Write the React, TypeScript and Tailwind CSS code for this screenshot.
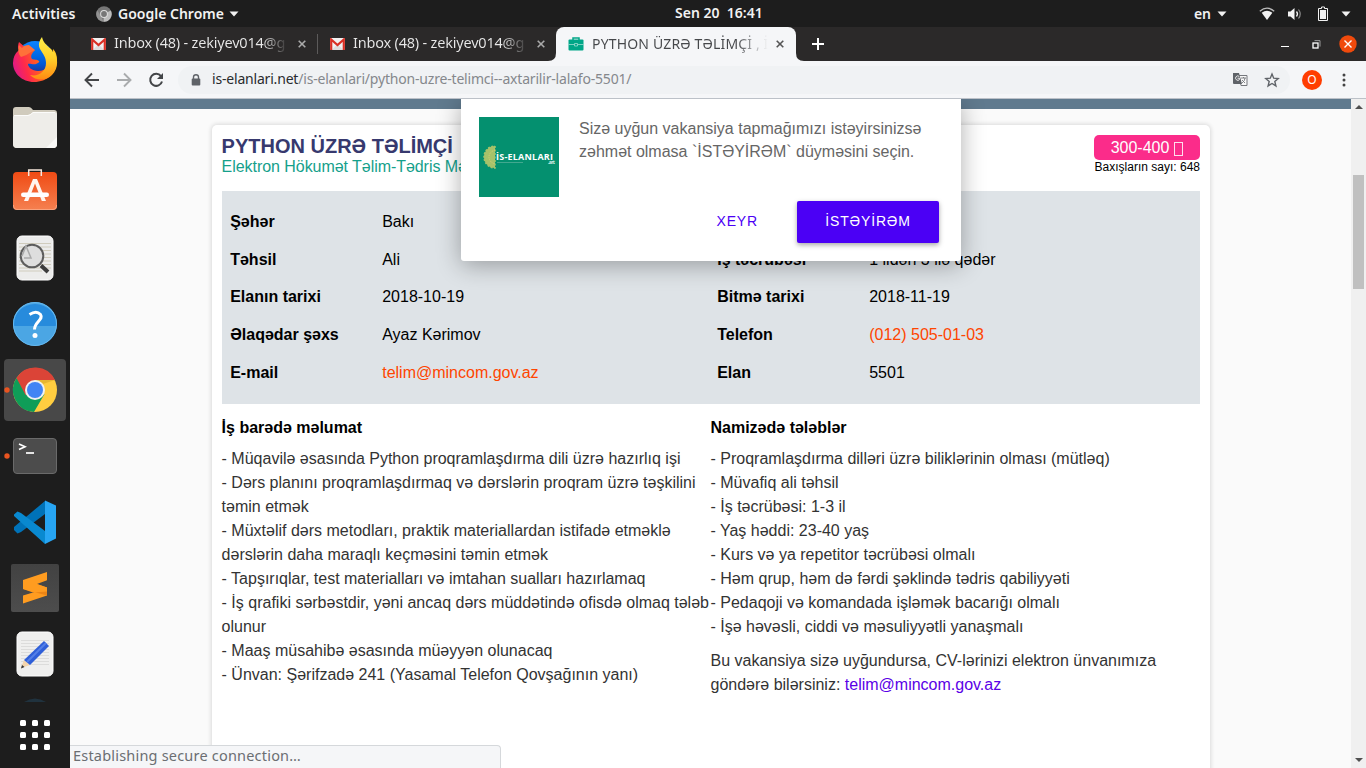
import React from "react";

const ui = "font-['Noto_Sans',sans-serif]";

function Caret() {
  return (
    <svg width="10" height="6" viewBox="0 0 10 6">
      <path d="M0.5 0.5h9L5 5.5z" fill="#f2f2f2" />
    </svg>
  );
}

function TopBar() {
  return (
    <div className={`relative flex h-[27px] shrink-0 items-center bg-[#1d1d1d] text-[14px] font-semibold text-[#f2f2f2] ${ui}`}>
      <span className="ml-3 w-[84px] whitespace-nowrap tracking-[0.1px]">Activities</span>
      <svg width="16" height="16" viewBox="0 0 16 16">
        <circle cx="8" cy="8" r="7.7" fill="#777" />
        <path d="M8 8L14.8 4.5A7.7 7.7 0 0 1 7.5 15.7z" fill="#bdbdbd" />
        <path d="M1.2 4.2L5 10 7.5 15.7A7.7 7.7 0 0 1 1.2 4.2z" fill="#929292" />
        <circle cx="8" cy="8" r="3.9" fill="#ddd" />
        <circle cx="8" cy="8" r="2.9" fill="#777" />
      </svg>
      <span className="ml-[6px] w-[106px] whitespace-nowrap">Google Chrome</span>
      <span className="ml-[5px]"><Caret /></span>
      <span className="ml-[436px] w-[88px] -translate-y-px whitespace-pre">{"Sen 20  16:41"}</span>
      <span className="ml-auto mr-[6px]">en</span>
      <Caret />
      <svg className="ml-[32px]" width="16" height="14" viewBox="0 0 16 14">
        <path d="M.8 4.2Q8-1.8 15.2 4.2" fill="none" stroke="#bbb" strokeWidth="1.3" />
        <path d="M2.7 5.8Q8 1.8 13.3 5.8L8 13z" fill="#f2f2f2" />
      </svg>
      <svg className="ml-[12px]" width="16" height="14" viewBox="0 0 16 14">
        <path d="M1 4.5h2.5L7.5 1v12L3.500 9.500H1z" fill="#f2f2f2" />
        <path d="M9.500 4.500q2 2.500 0 5" fill="none" stroke="#f2f2f2" strokeWidth="1.300" />
        <path d="M11.500 2.500q3.500 4.500 0 9" fill="none" stroke="#888" strokeWidth="1.200" />
      </svg>
      <svg className="ml-[14px]" width="12" height="16" viewBox="0 0 12 16">
        <path d="M1.500 2.500h3v-1.500h3v1.500h3v12h-9z" fill="none" stroke="#f2f2f2" />
        <path d="M3 4h6v9H3z" fill="#f2f2f2" />
      </svg>
      <span className="ml-[12px] mr-[15px]"><Caret /></span>
    </div>
  );
}

function DockCell({ children, active, dot }: { children: React.ReactNode; active?: boolean; dot?: boolean }) {
  return (
    <svg className="block shrink-0" width="70" height="66" viewBox="0 0 70 66">
      {active && <rect x="4" y="2" width="62" height="62" rx="4" fill="#484848" />}
      {dot && <circle cx="7" cy="33" r="2.700" fill="#e95420" />}
      {children}
    </svg>
  );
}

function Dock() {
  return (
    <div className="flex w-[70px] shrink-0 flex-col bg-[#1d1d1d]">
      <DockCell>
        <defs>
          <linearGradient id="fx" x1="0" y1=".6" x2="1" y2=".3">
            <stop offset="0" stopColor="#e01a87" /><stop offset=".25" stopColor="#ff2a4a" />
            <stop offset=".6" stopColor="#ff6a1a" /><stop offset="1" stopColor="#ffc61a" />
          </linearGradient>
          <linearGradient id="fy" x1="0" y1="0" x2="0" y2="1">
            <stop offset="0" stopColor="#fff04a" /><stop offset=".5" stopColor="#ffd02a" /><stop offset="1" stopColor="#ff8a12" />
          </linearGradient>
          <linearGradient id="fb" x1="0" y1="0" x2="0" y2="1">
            <stop offset="0" stopColor="#0a84ff" /><stop offset=".6" stopColor="#0059d6" /><stop offset="1" stopColor="#331a70" />
          </linearGradient>
        </defs>
        <circle cx="35" cy="33" r="19" fill="url(#fb)" />
        <path d="M19 15q-2 5 0 8-6 5-6 13c0 10 9 19 21 19 13 0 23-9 23-22 0-6-2-9-4-11v8C52 37 47 44 38 44c-6 0-10-4-10-7 2-1 5 1 8 0 2-1 4-2 3-3-2-2-5-1-7-2-2-3 0-6 3-9-3 0-5-2-8-1z" fill="url(#fx)" />
        <path d="M42 10c-3 4-4 8-2 12 3 5 6 8 6 14 0 9-8 14-16 12 6 6 16 6 22 0 7-7 6-17 2-24-1 2-1 1-2-1-4-4-9-7-10-13z" fill="url(#fy)" />
        <path d="M19 18q-2 8 2 12 5-1 10-5l4-2-6-5q-5 0-7 3z" fill="#ff7139" />
      </DockCell>
      <DockCell>
        <path d="M13 17q0-3 3-3h13q2 0 4 3h21q3 0 3 3v31q0 4-4 4H17q-4 0-4-4z" fill="#d0cbbd" />
        <path d="M13 25q0-3 3-3h12q2 0 5-3h21q3 0 3 3v29q0 4-4 4H17q-4 0-4-4z" fill="#eeede9" />
        <path d="M14 22.500h14q2 0 5-3h22" fill="none" stroke="#fff" strokeWidth=".8" />
        <path d="M46 55l11-11v7q0 4-4 4z" fill="#f9f9f7" />
      </DockCell>
      <DockCell>
        <defs><linearGradient id="sw" x1="0" y1="0" x2="0" y2="1"><stop stopColor="#f04b14" /><stop offset="1" stopColor="#f58050" /></linearGradient></defs>
        <rect x="13" y="13" width="44" height="38" rx="4" fill="url(#sw)" />
        <path d="M13.500 46v1q0 3.500 3.500 3.500h36q3.500 0 3.500-3.500v-1" fill="none" stroke="#f9a27d" />
        <path d="M28.700 17v-6h12.600v6" fill="none" stroke="#f7e7dc" strokeWidth="1.500" />
        <path d="M33 20h4l9 22h-4.200L35 24.500 28.200 42H24z" fill="#fff5ee" />
        <rect x="21" y="33.500" width="28" height="4.500" rx="2.200" fill="#fff" />
      </DockCell>
      <DockCell>
        <rect x="17" y="11" width="36" height="44" rx="5" fill="#ececeb" stroke="#fff" />
        <path d="M19 18.500h32M19 22h32M19 25.500h32M19 29h32M19 32.500h32M19 36h32M19 39.500h32M19 43h32M19 46h23" stroke="#d0ccbd" />
        <circle cx="32" cy="31" r="11.300" fill="#dedede" stroke="#5d5d5d" strokeWidth="2" />
        <path d="M22 31l4-10 5 12h-7" stroke="#aaa" strokeWidth="1.500" fill="none" />
        <path d="M41 40.500l7 6.500" stroke="#3c3c3c" strokeWidth="4" />
      </DockCell>
      <DockCell>
        <circle cx="35" cy="33" r="22" fill="#4ba6e4" />
        <path d="M13 35a22 22 0 0 1 44 0z" fill="#278bdc" />
        <circle cx="35" cy="33" r="21.500" fill="none" stroke="#65b8ef" />
        <path d="M29.500 23.500q7-4.500 11 0c3.500 5-6 7.500-6 15" fill="none" stroke="#fff" strokeWidth="3" />
        <circle cx="35" cy="44.500" r="2.500" fill="#fff" />
      </DockCell>
      <DockCell active dot>
        <circle cx="35" cy="33" r="22" fill="#ffcd40" />
        <path d="M35 33L16.500 21A22 22 0 0 0 34 55L44.500 37z" fill="#0f9d58" />
        <path d="M35 33L25.500 38 16.500 21A22 22 0 0 1 55 23H35z" fill="#db4437" />
        <path d="M36 23h19l-12 4z" fill="#b98c16" opacity=".35" />
        <circle cx="35" cy="33" r="10" fill="#f1f1f1" />
        <circle cx="35" cy="33" r="8" fill="#4285f4" />
      </DockCell>
      <DockCell dot>
        <rect x="13.500" y="15.500" width="43" height="35" rx="3.500" fill="#4c4c4c" stroke="#6a6a6a" />
        <path d="M19 21l6 2.800-6 2.800" fill="none" stroke="#fff" strokeWidth="1.700" />
        <path d="M26 30h8" stroke="#fff" strokeWidth="1.700" />
      </DockCell>
      <DockCell>
        <path d="M45 12v13L21 43l-3.500 1.500L14 41v-3z" fill="#0072b8" />
        <path d="M14 28v-2.500l3.500-3L21 24l24 18v13L14 27z" fill="#0989d0" />
        <path d="M45 11.500L56 16.500v33L45 55z" fill="#27a5f3" />
      </DockCell>
      <DockCell>
        <defs><linearGradient id="sb" x1="0" y1="0" x2="0" y2="1"><stop stopColor="#424242" /><stop offset="1" stopColor="#4d4d4d" /></linearGradient></defs>
        <rect x="11" y="9" width="48" height="48" rx="2" fill="url(#sb)" />
        <path d="M23 40.500l10-3L47 32.500v8L23 48.500z" fill="#ff9c20" />
        <path d="M23 25l14 4 10 3.500v8L23 34z" fill="#ec8516" />
        <path d="M23 25L47 17v8.200L37 29l10 3.500v4L33 37.500 23 34z" fill="#ff9c20" />
      </DockCell>
      <DockCell>
        <rect x="17" y="11" width="36" height="44" rx="5" fill="#efefee" stroke="#fff" />
        <path d="M21 19.500h28M21 22.500h28M21 25.500h28M21 28.500h28M21 31.500h28M21 34.500h28M21 37.500h28M21 40.500h28M21 43.500h28" stroke="#d7d7d6" strokeWidth=".8" />
        <path d="M21 47l3-8 6 5z" fill="#f3d4ac" />
        <path d="M21 47.500l1-3.500 2.500 2z" fill="#333" />
        <path d="M24 39L44 20l5 5L30 44z" fill="#2f5fd8" />
        <path d="M27 41L46 22" stroke="#547fe8" strokeWidth="2" />
      </DockCell>
      <svg className="mt-[11px] block" width="70" height="70" viewBox="0 0 70 70">
        <path d="M24 4q11-7 22 0z" fill="#20323e" />
        {[22, 34, 46].map((y) => [20, 32, 44].map((x) => <rect key={`${x}-${y}`} x={x} y={y} width="6" height="6" rx="1.500" fill="#fff" />))}
      </svg>
    </div>
  );
}

function Gmail() {
  return (
    <svg className="shrink-0" width="15" height="12" viewBox="0 0 15 12">
      <rect width="15" height="12" rx="1" fill="#f1f1f1" />
      <path d="M2 12l5.500-6 5.500 6z" fill="#dcdcdc" />
      <path d="M1.200 12V1.500L7.500 7l6.300-5.500V12" fill="none" stroke="#d93025" strokeWidth="2.200" />
    </svg>
  );
}

function Cross({ color }: { color: string }) {
  return (
    <svg className="shrink-0" width="8" height="8" viewBox="0 0 8 8">
      <path d="M.7.7l6.600 6.600M7.300.7L.7 7.300" stroke={color} strokeWidth="1.600" />
    </svg>
  );
}

function InboxTab() {
  return (
    <>
      <Gmail />
      <span className="ml-[8px] w-[175px] -translate-y-px overflow-hidden whitespace-nowrap bg-[linear-gradient(90deg,#e9e9e9_85%,#2b2929_100%)] bg-clip-text text-[14.500px] tracking-[-0.2px] text-transparent">
        Inbox (48) - zekiyev014@g
      </span>
    </>
  );
}

function TabStrip() {
  return (
    <div className={`flex h-[34px] shrink-0 items-center bg-[#2b2929] ${ui}`}>
      <div className="flex w-[248px] items-center pl-[21px]">
        <InboxTab />
        <span className="ml-[10px]"><Cross color="#aaa" /></span>
        <span className="ml-[11px] h-5 w-px bg-[#5c5a5a]" />
      </div>
      <div className="flex w-[238px] items-center pl-[12px]">
        <InboxTab />
        <span className="ml-[9px]"><Cross color="#aaa" /></span>
      </div>
      <div className="relative flex h-full w-[240px] items-center rounded-t-[8px] bg-[#f5f6f8] pl-[12px]">
        <svg className="absolute bottom-0 left-[-8px]" width="8" height="8"><path d="M8 0v8H0Q8 8 8 0" fill="#f5f6f8" /></svg>
        <svg className="absolute bottom-0 right-[-8px]" width="8" height="8"><path d="M0 0v8h8Q0 8 0 0" fill="#f5f6f8" /></svg>
        <svg width="16" height="14" viewBox="0 0 16 14">
          <path d="M5 3V1h6v2" fill="none" stroke="#00a687" strokeWidth="1.500" />
          <rect x=".5" y="2.500" width="15" height="11" rx="1" fill="#00a687" />
          <path d="M0 7.500h6.500M9.500 7.500H16M6.500 6.500h3v2.500h-3z" stroke="#8ad6c8" fill="none" strokeWidth=".9" />
        </svg>
        <span className="ml-[8px] w-[176px] -translate-y-px overflow-hidden whitespace-nowrap bg-[linear-gradient(90deg,#45474a_82%,#f5f6f8_100%)] bg-clip-text text-[14px] tracking-[0.05px] text-transparent">
          <span className="tracking-[0.16px]">PYTHON ÜZRƏ TƏLİMÇİ</span> , İ
        </span>
        <span className="ml-[8px]"><Cross color="#555" /></span>
      </div>
      <svg className="ml-[16px]" width="12" height="12"><path d="M6 0v12M0 6h12" stroke="#fff" strokeWidth="2" /></svg>
      <span className="ml-auto mt-[5px] h-px w-2 bg-white" />
      <svg className="ml-[23px]" width="9" height="9" viewBox="0 0 9 9">
        <rect x="1" y="3" width="5" height="5" fill="none" stroke="#fff" strokeWidth="1.300" />
        <path d="M2.500 .6h5.500v6" fill="none" stroke="#999" />
      </svg>
      <svg className="ml-[18px] mr-[9px]" width="18" height="18" viewBox="0 0 18 18">
        <circle cx="9" cy="9" r="8.700" fill="#f04a0c" />
        <path d="M5.500 5.500l7 7M12.500 5.500l-7 7" stroke="#fff" strokeWidth="1.400" />
      </svg>
    </div>
  );
}

function Toolbar() {
  return (
    <div className={`flex h-[38px] shrink-0 items-center border-b border-[#bcc1c8] bg-[#f5f6f8] ${ui}`}>
      <svg className="ml-[14px]" width="16" height="16" viewBox="0 0 16 16"><path d="M15 8H2M8 1.500L1.500 8 8 14.500" fill="none" stroke="#434548" strokeWidth="1.900" /></svg>
      <svg className="ml-[16px]" width="16" height="16" viewBox="0 0 16 16"><path d="M1 8h13M8 1.500L14.500 8 8 14.500" fill="none" stroke="#a9abad" strokeWidth="1.900" /></svg>
      <svg className="ml-[16px]" width="16" height="16" viewBox="0 0 16 16">
        <path d="M13 4.200A6 6 0 1 0 14 9.500" fill="none" stroke="#434548" strokeWidth="2" />
        <path d="M15 1v6H9z" fill="#434548" />
      </svg>
      <div className="ml-[14px] flex h-7 w-[1112px] items-center rounded-full bg-[#f0f2f4]">
        <svg className="ml-[13px]" width="10" height="12" viewBox="0 0 10 12">
          <path d="M2.500 6V3q0-2.200 2.500-2.200T7.500 3v3" fill="none" stroke="#5f6368" strokeWidth="1.400" />
          <rect x=".7" y="4.500" width="8.600" height="7" rx="1" fill="#5f6368" />
        </svg>
        <span className="ml-[11px] -translate-y-px whitespace-nowrap text-[14px] tracking-[-0.19px] text-[#85888c]"><span className="text-[#292b2d]">is-elanlari.net</span>/is-elanlari/python-uzre-telimci--axtarilir-lalafo-5501/</span>
        <svg className="ml-auto" width="15" height="15" viewBox="0 0 15 15">
          <path d="M6 3.500h8v10H8z" fill="#f8f8f8" stroke="#74777c" />
          <path d="M0 1h6l3 11H1q-1 0-1-1z" fill="#5f6368" />
          <path d="M6.300 4.500a2.200 2.200 0 1 0 .2 3V6.200h-2" fill="none" stroke="#eee" />
          <path d="M8 6h5M10.500 5v1M9 11q3-2 3-5M9 8l3 3" fill="none" stroke="#74777c" strokeWidth=".9" />
        </svg>
        <svg className="ml-[16px] mr-[10px]" width="16" height="16" viewBox="0 0 16 16"><path d="M8 2l1.700 4.200 4.500.4-3.400 2.900 1.100 4.400L8 11.500l-3.900 2.400 1.100-4.400-3.400-2.900 4.500-.4z" fill="none" stroke="#5f6368" strokeWidth="1.400" /></svg>
      </div>
      <span className="ml-3 flex h-5 w-5 items-center justify-center rounded-full bg-[#ff3d00] text-[12px] leading-none text-white">O</span>
      <svg className="ml-[20px]" width="4" height="14" viewBox="0 0 4 14"><circle cx="2" cy="2" r="1.500" fill="#444" /><circle cx="2" cy="7" r="1.500" fill="#444" /><circle cx="2" cy="12" r="1.500" fill="#444" /></svg>
    </div>
  );
}

const rows = [
  ["Şəhər", "Bakı", "", ""],
  ["Təhsil", "Ali", "İş təcrübəsi", "1 ildən 3 ilə qədər"],
  ["Elanın tarixi", "2018-10-19", "Bitmə tarixi", "2018-11-19"],
  ["Əlaqədar şəxs", "Ayaz Kərimov", "Telefon", "(012) 505-01-03"],
  ["E-mail", "telim@mincom.gov.az", "Elan", "5501"],
];

const about = [
  "- Müqavilə əsasında Python proqramlaşdırma dili üzrə hazırlıq işi",
  "- Dərs planını proqramlaşdırmaq və dərslərin proqram üzrə təşkilini",
  "təmin etmək",
  "- Müxtəlif dərs metodları, praktik materiallardan istifadə etməklə",
  "dərslərin daha maraqlı keçməsini təmin etmək",
  "- Tapşırıqlar, test materialları və imtahan sualları hazırlamaq",
  "- İş qrafiki sərbəstdir, yəni ancaq dərs müddətində ofisdə olmaq tələb",
  "olunur",
  "- Maaş müsahibə əsasında müəyyən olunacaq",
  "- Ünvan: Şərifzadə 241 (Yasamal Telefon Qovşağının yanı)",
];

const wanted = [
  "- Proqramlaşdırma dilləri üzrə biliklərinin olması (mütləq)",
  "- Müvafiq ali təhsil",
  "- İş təcrübəsi: 1-3 il",
  "- Yaş həddi: 23-40 yaş",
  "- Kurs və ya repetitor təcrübəsi olmalı",
  "- Həm qrup, həm də fərdi şəklində tədris qabiliyyəti",
  "- Pedaqoji və komandada işləmək bacarığı olmalı",
  "- İşə həvəsli, ciddi və məsuliyyətli yanaşmalı",
];

function JobCard() {
  return (
    <div className="ml-[141.600px] mt-[16px] h-[700px] w-[998.400px] shrink-0 rounded-[5px] bg-white px-[10px] pt-[10px] shadow-[0_0_4px_1px_rgba(0,0,0,0.13)]">
      <div className="flex h-[56px] justify-between">
        <div className="whitespace-nowrap">
          <div className="text-[20px] font-bold leading-[22px] text-[#37396e]">PYTHON ÜZRƏ TƏLİMÇİ</div>
          <div className="text-[16px] leading-5 tracking-[-0.05px] text-[#15a08b]">Elektron Hökumət Təlim-Tədris Mə</div>
        </div>
        <div className="flex flex-col items-end">
          <div className="flex h-[25px] w-[106px] items-center justify-center gap-[5px] rounded-[5px] bg-[#fb2c8a] text-[16px] text-white">
            300-400 <span className="mt-[3px] h-[14px] w-[9px] border border-white/85" />
          </div>
          <div className="whitespace-nowrap text-[12px] leading-[14px] text-black">Baxışların sayı: 648</div>
        </div>
      </div>
      <div className="h-[213px] bg-[#dee3e7] pt-[12px]">
        {rows.map((r) => (
          <div key={r[0]} className="grid h-[37.700px] grid-cols-[152px_335px_152px_1fr] items-center whitespace-nowrap pl-[8.600px]">
            <b>{r[0]}</b>
            <span className={r[1].includes("@") ? "text-[#ff4500]" : ""}>{r[1]}</span>
            <b>{r[2]}</b>
            <span className={r[3].startsWith("(") ? "text-[#ff4500]" : ""}>{r[3]}</span>
          </div>
        ))}
      </div>
      <div className="grid grid-cols-2 whitespace-nowrap pt-[12px] leading-6 text-[#333]">
        <div>
          <b className="mb-[7px] block text-black">İş barədə məlumat</b>
          {about.map((t) => <div key={t}>{t}</div>)}
        </div>
        <div className="-ml-[0.300px]">
          <b className="mb-[7px] block text-black">Namizədə tələblər</b>
          {wanted.map((t) => <div key={t}>{t}</div>)}
          <div className="mt-[10px]">Bu vakansiya sizə uyğundursa, CV-lərinizi elektron ünvanımıza</div>
          <div>göndərə bilərsiniz: <span className="text-[#5a00e6]">telim@mincom.gov.az</span></div>
        </div>
      </div>
    </div>
  );
}

function Prompt() {
  return (
    <div className="absolute left-[391px] top-0 h-[162px] w-[500px] rounded-b-[3px] bg-white px-[18px] pt-[18px] shadow-[0_4px_24px_rgba(0,0,0,0.32)]">
      <div className="flex h-[84px]">
        <div className="flex h-[80px] w-[80px] items-center bg-[#04906f] pl-[4px]">
          <svg width="76" height="26" viewBox="0 0 76 26">
            <path d="M12 2v22A11 11 0 0 1 12 2" fill="#a6c26a" stroke="#a6c26a" strokeDasharray="2 1.500" strokeWidth="1.500" />
            <path d="M12 6q-6 2-6 7t6 7" fill="none" stroke="#d7cf76" strokeDasharray="1 1" />
            <text x="13" y="16" fill="#fff" fontFamily="Open Sans, sans-serif" fontWeight="700" fontSize="9" textLength="57">İS-ELANLARI</text>
            <path d="M14 18.500h26" stroke="#6db9a4" strokeWidth=".6" />
            <text x="65" y="20" fill="#d9efe9" fontFamily="Open Sans, sans-serif" fontWeight="700" fontSize="5" textLength="7">.art</text>
          </svg>
        </div>
        <div className="ml-5 whitespace-nowrap text-[16px] leading-[23px] text-[#666]">
          Sizə uyğun vakansiya tapmağımızı istəyirsinizsə<br />zəhmət olmasa `İSTƏYİRƏM` düyməsini seçin.
        </div>
      </div>
      <div className="flex justify-end pr-1 text-[14px] tracking-[0.850px]">
        <button className="mr-[39px] h-[42px] pb-[2px] text-[#4b00f5]">XEYR</button>
        <button className="h-[42px] w-[142px] rounded-[2px] bg-[#4b00f5] pb-[2px] text-white shadow-[0_2px_5px_rgba(0,0,0,0.35)]">İSTƏYİRƏM</button>
      </div>
    </div>
  );
}

function Scrollbar() {
  return (
    <div className="flex w-[15px] shrink-0 flex-col items-center bg-[#f0f0f0]">
      <svg className="mt-[6px] shrink-0" width="8" height="4"><path d="M4 0l4 4H0z" fill="#505050" /></svg>
      <div className="mt-[66px] h-[114px] w-[11px] bg-[#c0c0c0]" />
      <svg className="mb-[6px] mt-auto shrink-0" width="8" height="4"><path d="M0 0h8L4 4z" fill="#505050" /></svg>
    </div>
  );
}

export default function App() {
  return (
    <div className="flex h-[768px] w-[1366px] flex-col overflow-hidden bg-[#1d1d1d]">
      <TopBar />
      <div className="flex min-h-0 flex-1">
        <Dock />
        <div className="flex min-w-0 flex-1 flex-col">
          <TabStrip />
          <Toolbar />
          <div className="relative flex min-h-0 flex-1 overflow-hidden font-['Liberation_Sans',Arial,sans-serif] text-[16px] text-black">
            <div className="flex flex-1 flex-col overflow-hidden bg-[#fafafa]">
              <div className="h-[10px] shrink-0 bg-[#607a8e]" />
              <JobCard />
            </div>
            <Scrollbar />
            <Prompt />
            <div className={`absolute bottom-0 left-0 flex h-[23px] w-[431px] items-center rounded-tr-[4px] border-r border-t border-[#d5d8db] bg-[#f5f6f8] pb-[2px] pl-[3px] text-[14.500px] tracking-[0.200px] text-[#6b6e72] ${ui}`}>
              Establishing secure connection…
            </div>
          </div>
        </div>
      </div>
    </div>
  );
}
